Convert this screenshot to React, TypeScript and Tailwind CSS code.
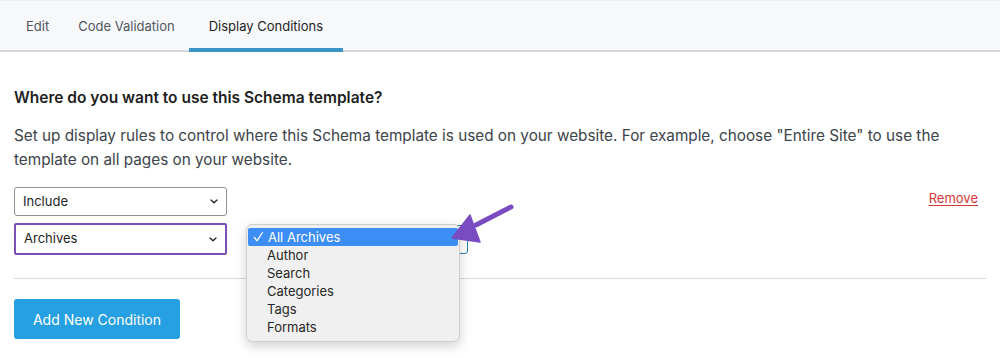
import React from "react";

function Chevron() {
  return (
    <svg width="8" height="5" viewBox="0 0 8 5" className="shrink-0">
      <path d="M1 1l3 2.8L7 1" fill="none" stroke="#1e1e1e" strokeWidth="1.3" strokeLinecap="round" strokeLinejoin="round" />
    </svg>
  );
}

function Select({ label, className }: { label: string; className: string }) {
  return (
    <div className={`flex w-[213px] items-center justify-between bg-white pl-[8px] pr-[8px] text-[13px] text-[#1e1e1e] ${className}`}>
      <span>{label}</span>
      <Chevron />
    </div>
  );
}

export default function App() {
  const items = ["Author", "Search", "Categories", "Tags", "Formats"];
  return (
    <div className="relative h-[358px] w-[1000px] overflow-hidden bg-white" style={{ fontFamily: "Inter, 'Noto Sans', sans-serif" }}>
      {/* Tab bar */}
      <div className="flex h-[52px] border-t border-[#eceef1] border-b-2 border-b-[#d5d7dc] bg-[#f7f8fa] pl-[11px] pt-[3px] text-[13px]">
        <div className="flex items-center px-[15px] text-[#50575e]">Edit</div>
        <div className="flex items-center px-[14px] text-[#50575e]">Code Validation</div>
        <div className="relative flex items-center px-[20px] text-[#1e1e1e]">
          Display Conditions
          <div className="absolute bottom-[-2px] left-0 right-0 h-[4px] bg-[#3b94c6]" />
        </div>
      </div>

      <div className="px-[14px]">
        <h2 className="mt-[35px] text-[15.5px] font-semibold leading-[22px] text-[#1e1e1e]">
          Where do you want to use this Schema template?
        </h2>
        <p className="mt-[15px] text-[15.3px] leading-[24px] text-[#3c434a]">
          Set up display rules to control where this Schema template is used on your website. For example, choose "Entire Site" to use the template on all pages on your website.
        </p>

        <div className="mt-[15px] flex justify-between">
          <Select label="Include" className="h-[29px] rounded-[3px] border border-[#8c8f94]" />
          <a className="mr-[8px] mt-[2px] text-[13px] leading-[18px] text-[#d63638] underline underline-offset-2">Remove</a>
        </div>

        <div className="relative mt-[7px] flex items-center gap-[28px]">
          <Select label="Archives" className="h-[32px] rounded-[2px] border-[2px] border-[#7e4fb6]" />
          <div className="h-[29px] w-[213px] rounded-[3px] border border-[#2a7fb3] bg-white" />

          {/* Open dropdown list */}
          <div className="absolute left-[232px] top-[1px] z-10 w-[214px] rounded-[6px] border border-[#cfcfcf] bg-[#f0f0f0] pb-[5px] pt-[3px] text-[13px] leading-[18px] text-[#262626] shadow-[0_4px_12px_rgba(0,0,0,0.18)]">
            <div className="mx-[1px] flex h-[18px] items-center rounded-[2px] bg-[#3d8ef4] pl-[5px] text-white">
              <svg width="15" height="18" viewBox="0 0 15 18" className="shrink-0">
                <path d="M1.5 9.5 L4 12.8 L9.5 4.5" fill="none" stroke="#fff" strokeWidth="1.3" strokeLinecap="round" strokeLinejoin="round" />
              </svg>
              <span>All Archives</span>
            </div>
            {items.map((it) => (
              <div key={it} className="pl-[20px]">{it}</div>
            ))}
          </div>
        </div>

        <div className="mt-[23px] h-px bg-[#dcdcde]" />

        <button className="mt-[20px] h-[40px] w-[166px] rounded-[3px] bg-[#26a0e2] text-[14px] text-white">
          Add New Condition
        </button>
      </div>

      {/* Purple pointer arrow */}
      <svg className="absolute left-[440px] top-[200px] z-20" width="80" height="50" viewBox="0 0 80 50">
        <path d="M71 7 L36 25" stroke="#7a4cc2" strokeWidth="5" strokeLinecap="round" />
        <path d="M12 38 L30 15 L34 26 L40 42 Z" fill="#7a4cc2" strokeLinejoin="round" stroke="#7a4cc2" strokeWidth="1.5" />
      </svg>
    </div>
  );
}
